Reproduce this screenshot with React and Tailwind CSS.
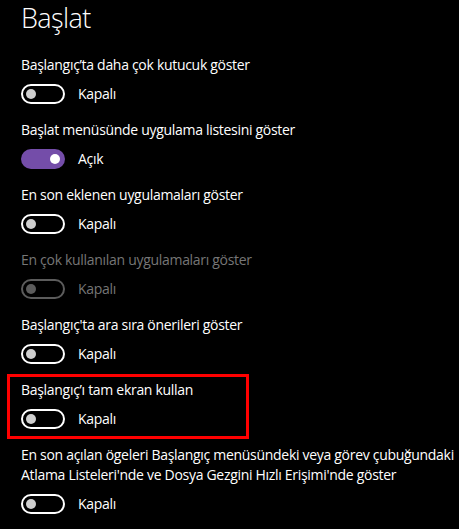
import React from 'react';

const font = { fontFamily: '"Open Sans", "Noto Sans", sans-serif' };

const Toggle = ({ on, disabled }) => {
  if (on) {
    return (
      <div className="w-[44px] h-[20px] rounded-full bg-[#744da9] flex items-center justify-end pr-[5px]">
        <div className="w-[10px] h-[10px] rounded-full bg-white" />
      </div>
    );
  }
  return (
    <div
      className={`w-[44px] h-[20px] rounded-full border-2 flex items-center pl-[3px] ${
        disabled ? 'border-[#5c5c5c]' : 'border-white'
      }`}
    >
      <div className={`w-[10px] h-[10px] rounded-full ${disabled ? 'bg-[#5c5c5c]' : 'bg-[#cfcfcf]'}`} />
    </div>
  );
};

const Setting = ({ label, on, disabled }) => (
  <div className="flex flex-col gap-[9px]">
    <p className={`text-[14px] leading-[20px] tracking-[-0.3px] ${disabled ? 'text-[#767676]' : 'text-white'}`}>
      {label}
    </p>
    <div className="flex items-center gap-[13px]">
      <Toggle on={on} disabled={disabled} />
      <span className={`text-[14px] leading-[20px] tracking-[-0.3px] ${disabled ? 'text-[#767676]' : 'text-white'}`}>
        {on ? 'Açık' : 'Kapalı'}
      </span>
    </div>
  </div>
);

export default function App() {
  return (
    <div className="w-[459px] h-[529px] bg-black overflow-hidden" style={font}>
      <div className="pl-[21px]">
        <h1 className="text-[27px] leading-[36px] font-light text-white tracking-[-0.6px]">Başlat</h1>
        <div className="flex flex-col gap-[16px] mt-[19px]">
          <Setting label="Başlangıç’ta daha çok kutucuk göster" />
          <Setting label="Başlat menüsünde uygulama listesini göster" on />
          <Setting label="En son eklenen uygulamaları göster" />
          <Setting label="En çok kullanılan uygulamaları göster" disabled />
          <Setting label="Başlangıç'ta ara sıra önerileri göster" />
          <div className="relative">
            <Setting label="Başlangıç’ı tam ekran kullan" />
            <div className="absolute -left-[14px] -top-[6px] w-[242px] h-[65px] border-[3px] border-[#ff0000] pointer-events-none" />
          </div>
          <div className="flex flex-col gap-[9px]">
            <p className="text-[14px] leading-[20px] tracking-[-0.3px] text-white whitespace-nowrap">
              En son açılan ögeleri Başlangıç menüsündeki veya görev çubuğundaki
              <br />
              Atlama Listeleri'nde ve Dosya Gezgini Hızlı Erişimi'nde göster
            </p>
            <div className="flex items-center gap-[13px]">
              <Toggle />
              <span className="text-[14px] leading-[20px] tracking-[-0.3px] text-white">Kapalı</span>
            </div>
          </div>
        </div>
      </div>
    </div>
  );
}
